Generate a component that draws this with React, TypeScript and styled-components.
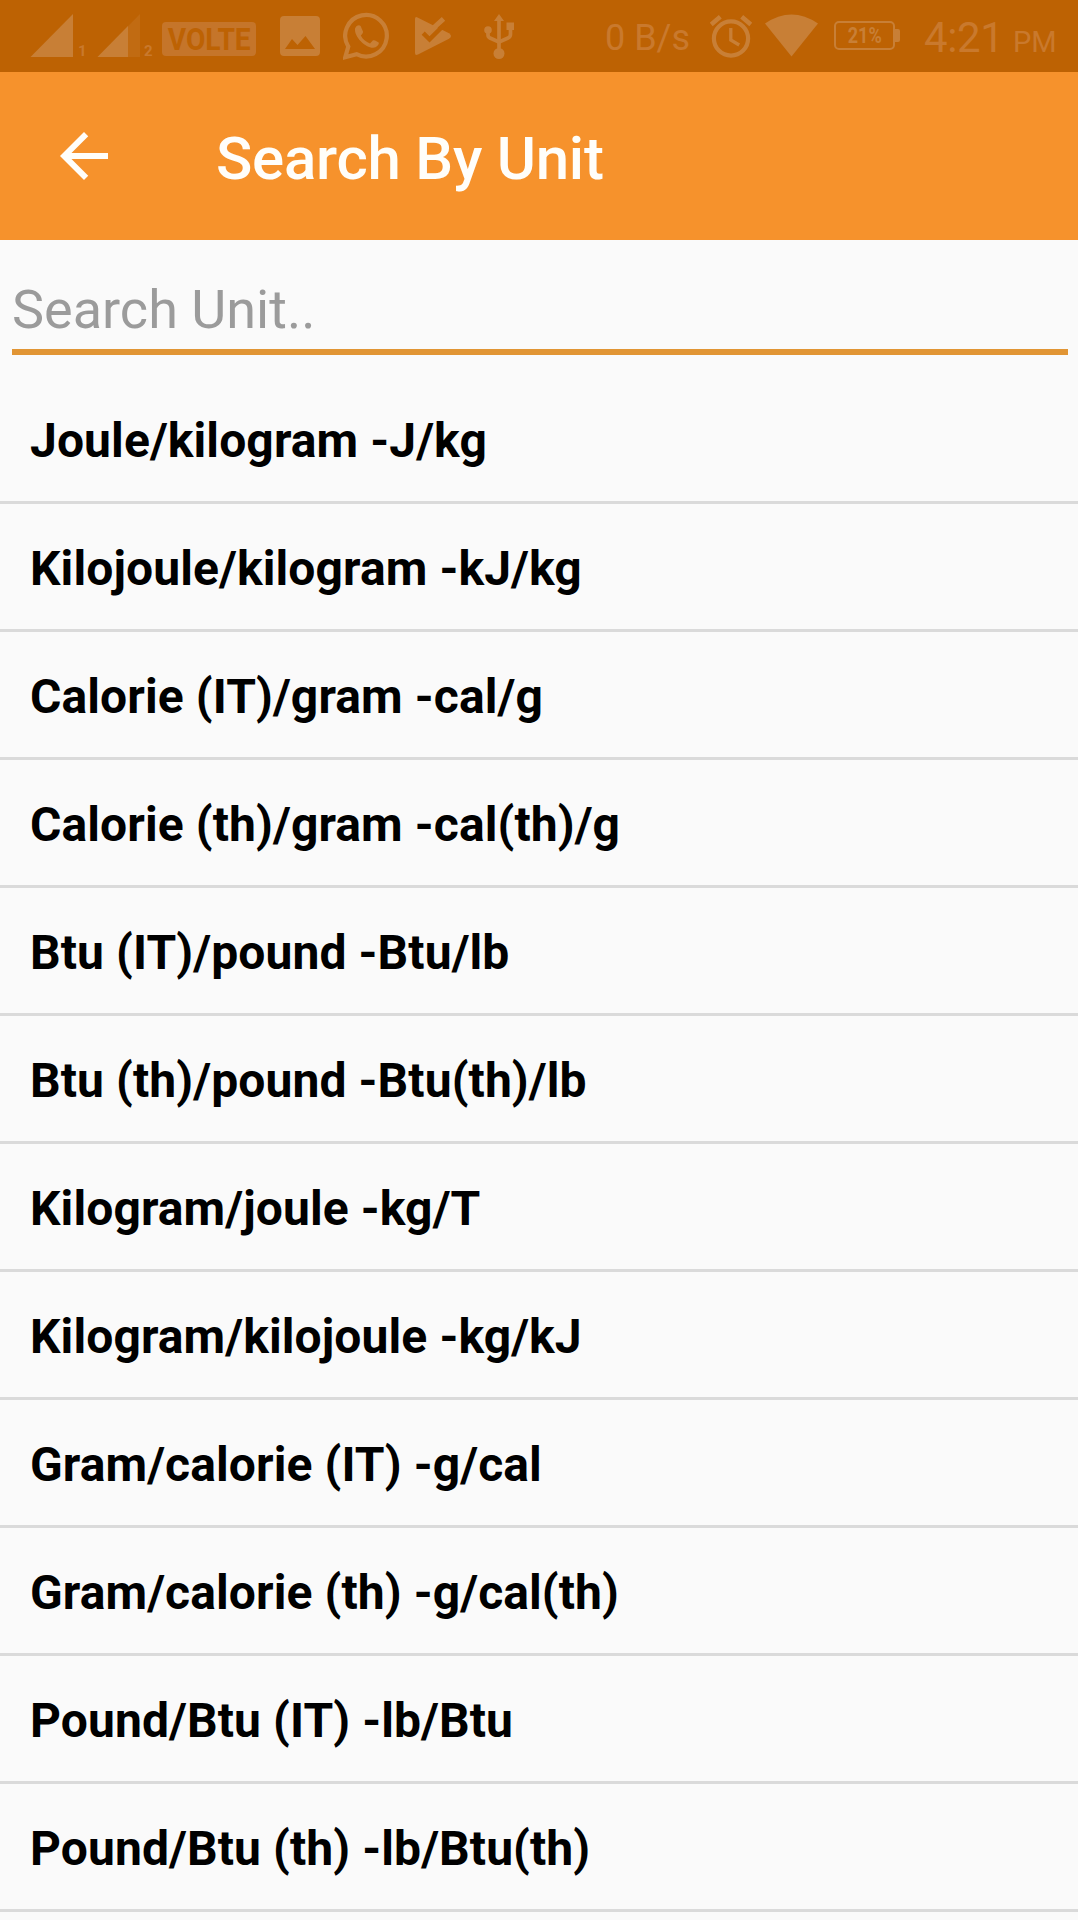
import React from "react";
import styled, { createGlobalStyle } from "styled-components";

const ICON = "#c87f36";
const DIM = "#c9792d";
const BAR = "#bd6203";

const GlobalStyle = createGlobalStyle`
  * { box-sizing: border-box; }
  html, body { margin: 0; padding: 0; background: #fafafa; }
  body { font-family: Roboto, "Noto Sans", sans-serif; }
`;

const Screen = styled.div`
  width: 1078px;
  height: 1920px;
  display: flex;
  flex-direction: column;
  overflow: hidden;
  background: #fafafa;
`;

const StatusBar = styled.header`
  flex: none;
  height: 72px;
  display: flex;
  align-items: flex-start;
  background: ${BAR};
`;

const Glyph = styled.svg<{ $before: number }>`
  display: block;
  flex: none;
  height: 72px;
  margin-left: ${(p) => p.$before}px;
`;

const StatusText = styled.span<{
  $before: number;
  $width: number;
  $size: number;
  $top: number;
  $weight?: number;
  $spacing?: number;
}>`
  flex: none;
  width: ${(p) => p.$width}px;
  margin-left: ${(p) => p.$before}px;
  margin-top: ${(p) => p.$top}px;
  font-size: ${(p) => p.$size}px;
  line-height: ${(p) => p.$size}px;
  font-weight: ${(p) => p.$weight ?? 400};
  letter-spacing: ${(p) => p.$spacing ?? 0}px;
  color: ${DIM};
  white-space: nowrap;
`;

const Condensed = styled.span<{ $scale: number }>`
  display: block;
  transform: scaleX(${(p) => p.$scale});
`;

const VolteBadge = styled.span`
  flex: none;
  width: 94px;
  height: 34px;
  margin: 22px 0 0 8px;
  display: flex;
  align-items: center;
  justify-content: center;
  border-radius: 4px;
  background: #c5752a;
  color: ${BAR};
  font-size: 32px;
  line-height: 34px;
  font-weight: 700;
`;

const Battery = styled.span`
  flex: none;
  width: 61px;
  height: 29px;
  margin: 21px 0 0 16px;
  display: flex;
  align-items: center;
  justify-content: center;
  border: 2px solid ${ICON};
  border-radius: 5px;
  color: ${ICON};
  font-size: 22px;
  line-height: 25px;
  font-weight: 700;
`;

const BatteryCap = styled.span`
  flex: none;
  width: 5px;
  height: 13px;
  margin-top: 29px;
  border-radius: 0 2px 2px 0;
  background: ${ICON};
`;

const Toolbar = styled.div`
  flex: none;
  height: 168px;
  display: flex;
  align-items: center;
  padding-left: 48px;
  background: #f6922c;
`;

const BackButton = styled.button`
  width: 72px;
  height: 72px;
  padding: 0;
  border: 0;
  background: none;
`;

const Title = styled.h1`
  margin: 6px 0 0 96px;
  font-size: 60px;
  line-height: 70px;
  font-weight: 500;
  letter-spacing: -0.25px;
  color: #fffefa;
`;

const SearchInput = styled.input`
  flex: none;
  width: 1056px;
  height: 87px;
  margin: 28px 0 0 12px;
  padding: 2px 0 0;
  border: 0;
  border-bottom: 6px solid #e19534;
  border-radius: 0;
  outline: 0;
  background: transparent;
  font-family: inherit;
  font-size: 54px;
  color: #000;
  &::placeholder { color: #9b9b9b; opacity: 1; }
`;

const UnitList = styled.ul`
  list-style: none;
  margin: 21px 0 0;
  padding: 0;
`;

const UnitRow = styled.li`
  height: 128px;
  display: flex;
  align-items: center;
  padding: 5px 30px 0;
  border-bottom: 3px solid #dadada;
  font-size: 48px;
  line-height: 56px;
  font-weight: 700;
  letter-spacing: 0.1px;
  color: #000;
`;

const units = [
  "Joule/kilogram -J/kg",
  "Kilojoule/kilogram -kJ/kg",
  "Calorie (IT)/gram -cal/g",
  "Calorie (th)/gram -cal(th)/g",
  "Btu (IT)/pound -Btu/lb",
  "Btu (th)/pound -Btu(th)/lb",
  "Kilogram/joule -kg/T",
  "Kilogram/kilojoule -kg/kJ",
  "Gram/calorie (IT) -g/cal",
  "Gram/calorie (th) -g/cal(th)",
  "Pound/Btu (IT) -lb/Btu",
  "Pound/Btu (th) -lb/Btu(th)",
];

const FullSignal = () => (
  <Glyph $before={30} width="44" viewBox="0 0 44 72">
    <path d="M0.5 57L43 14V57Z" fill={ICON} />
  </Glyph>
);

const PartialSignal = () => (
  <Glyph $before={8} width="44" viewBox="0 0 44 72">
    <path d="M1.5 57L44 14V57Z" fill="#c16b12" />
    <path d="M1.5 57L32 26V57Z" fill={ICON} />
  </Glyph>
);

const PictureIcon = () => (
  <Glyph $before={24} width="40" viewBox="0 0 40 72">
    <path
      fillRule="evenodd"
      fill={ICON}
      d="M4 16H36Q40 16 40 20V52Q40 56 36 56H4Q0 56 0 52V20Q0 16 4 16ZM5 49H35L25.5 36L17.5 45L12 39Z"
    />
  </Glyph>
);

const WhatsAppIcon = () => (
  <Glyph $before={23} width="47" viewBox="0 0 47 72" fill="none">
    <path
      d="M2.2 57.3L5.3 46.6A20.8 20.8 0 1 1 13.5 54.2Z"
      stroke={ICON}
      strokeWidth="4.2"
      strokeLinejoin="miter"
    />
    <path
      fill={ICON}
      d="M12 28.5C13 25.3 16.4 24.3 17.6 26L20 31.5C20.4 33 18.7 34.4 17.8 35.6C19.8 39.4 22.8 42 27 43.6L30 40.3C30.8 39.5 35.2 41.8 35.8 42.6C36.4 44.3 33.7 47.8 30 47.8C22.5 47.8 11 37 12 28.5Z"
    />
  </Glyph>
);

const PlayCheckIcon = () => (
  <Glyph $before={25} width="37" viewBox="0 0 37 72">
    <path
      d="M0 19Q0 16.3 2.5 17.4L34 33.2Q38 36 34 38.8L3 54.6Q0 56 0 53Z"
      fill={ICON}
    />
    <path d="M8.2 33.2L14.5 39.3L29.5 24.5" fill="none" stroke={BAR} strokeWidth="4.4" />
    <path d="M12 28L15 31L28.5 18.8" fill="none" stroke={ICON} strokeWidth="5" />
  </Glyph>
);

const UsbIcon = () => (
  <Glyph $before={32} width="32" viewBox="0 0 32 72">
    <g fill="none" stroke={ICON} strokeWidth="3.7">
      <path d="M15 53V20" />
      <path d="M4 30V35Q4 37 6 38L15 42" />
      <path d="M15 42L24 38Q26.5 37 26.5 34V27" />
    </g>
    <path d="M15 14L20 21H10Z" fill={ICON} />
    <circle cx="15" cy="53.5" r="5.5" fill={ICON} />
    <circle cx="4" cy="30" r="3.8" fill={ICON} />
    <path d="M22.5 22.5H30V30H22.5Z" fill={ICON} />
  </Glyph>
);

const AlarmIcon = () => (
  <Glyph $before={20} width="42" viewBox="0 0 42 72" fill="none" stroke={ICON}>
    <circle cx="21" cy="38.5" r="17.1" strokeWidth="4.2" />
    <path d="M1.2 24.4L10.3 16.8M31.7 16.8L40.8 24.4" strokeWidth="4.6" />
    <path d="M20.8 28V40L29.2 45" strokeWidth="3.3" />
  </Glyph>
);

const WifiIcon = () => (
  <Glyph $before={13} width="53" viewBox="0 0 53 72">
    <path d="M0 23.5Q26.5 5.5 53 23.5L26.5 56.5Z" fill={ICON} />
  </Glyph>
);

export default function App() {
  return (
    <>
      <GlobalStyle />
      <Screen>
        <StatusBar>
          <FullSignal />
          <StatusText $before={4} $width={10} $size={15} $top={44} $weight={700}>1</StatusText>
          <PartialSignal />
          <StatusText $before={4} $width={10} $size={15} $top={44} $weight={700}>2</StatusText>
          <VolteBadge>
            <Condensed $scale={0.88}>VOLTE</Condensed>
          </VolteBadge>
          <PictureIcon />
          <WhatsAppIcon />
          <PlayCheckIcon />
          <UsbIcon />
          <StatusText $before={89} $width={85} $size={36} $top={20}>0 B/s</StatusText>
          <AlarmIcon />
          <WifiIcon />
          <Battery>
            <Condensed $scale={0.82}>21%</Condensed>
          </Battery>
          <BatteryCap />
          <StatusText $before={24} $width={84} $size={42} $top={17} $spacing={-0.4}>4:21</StatusText>
          <StatusText $before={5} $width={46} $size={29} $top={28}>PM</StatusText>
        </StatusBar>
        <Toolbar>
          <BackButton aria-label="Back">
            <svg width="72" height="72" viewBox="0 0 24 24" fill="#fffefa">
              <path d="M20 11H7.83l5.59-5.59L12 4l-8 8 8 8 1.41-1.41L7.83 13H20v-2z" />
            </svg>
          </BackButton>
          <Title>Search By Unit</Title>
        </Toolbar>
        <SearchInput placeholder="Search Unit.." />
        <UnitList>
          {units.map((unit) => (
            <UnitRow key={unit}>{unit}</UnitRow>
          ))}
        </UnitList>
      </Screen>
    </>
  );
}
